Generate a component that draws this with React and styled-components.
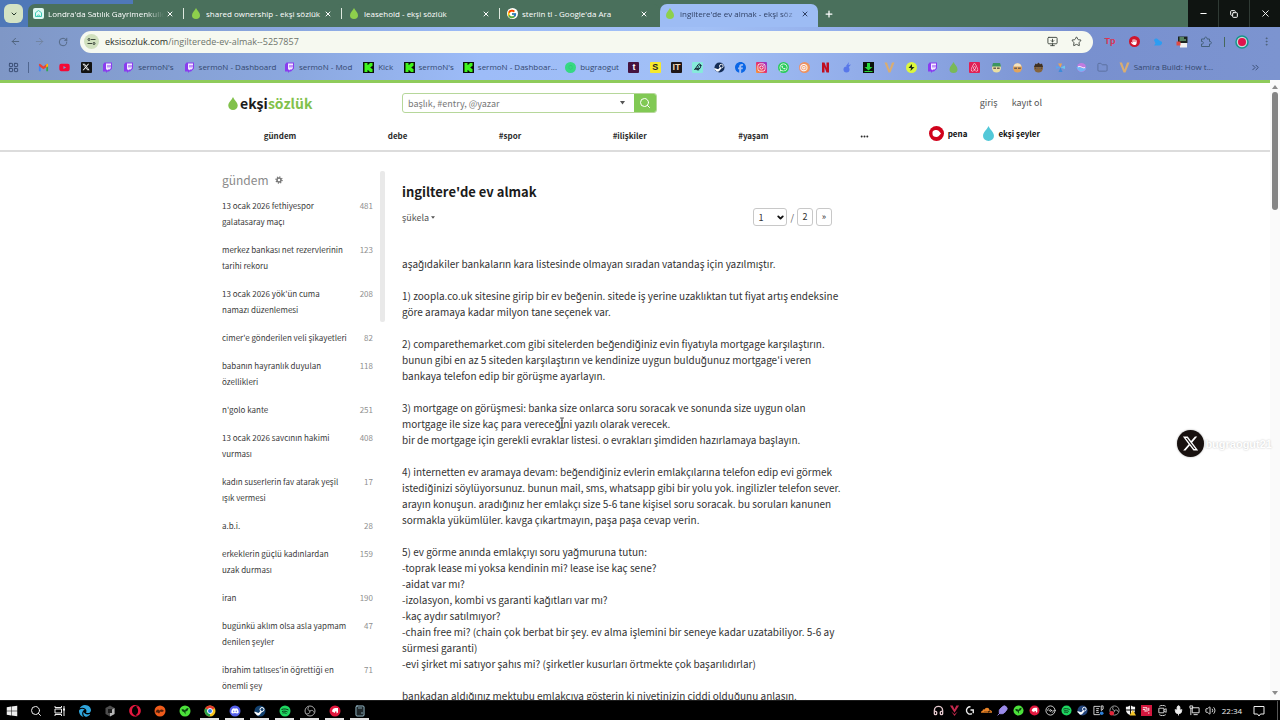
import React from "react";
import styled, { createGlobalStyle, css } from "styled-components";
import {
  FaYoutube, FaXTwitter, FaFacebook, FaInstagram, FaWhatsapp, FaEllipsis,
  FaDiscord, FaAirbnb, FaEdge, FaWindows, FaOpera, FaCloudflare, FaHand,
} from "react-icons/fa6";
import { FcGoogle } from "react-icons/fc";
import {
  ArrowLeft, ArrowRight, RotateCw, Search, Star, Puzzle, Plus, X, Minus, Copy, ChevronDown, ChevronsRight,
  Folder, LayoutGrid, MonitorDown, EllipsisVertical, Mic, Volume2, Feather, Headphones,
  Calculator, Disc3, Bird,
} from "lucide-react";

const siteFont = `"Noto Sans CJK JP", "Noto Sans", sans-serif`;
const uiFont = `"Open Sans", "Noto Sans", sans-serif`;

const GlobalStyle = createGlobalStyle`
  *, *::before, *::after { box-sizing: border-box; }
  body { margin: 0; background: #fff; font-family: ${siteFont}; }
  button, input, select { font: inherit; color: inherit; border: 0; padding: 0; background: none; outline: 0; }
  a { color: inherit; text-decoration: none; }
  ul, h1, h2, p { margin: 0; padding: 0; list-style: none; font-weight: inherit; }
  svg { display: block; flex: none; }
`;

const Screen = styled.div`
  height: 100vh;
  display: flex;
  flex-direction: column;
  overflow: hidden;
`;

/* ---------- browser ---------- */
const TabStrip = styled.div`
  flex: none;
  display: flex;
  height: 27px;
  font: 8px/12px ${uiFont};
  color: #fff;
  background: linear-gradient(90deg, #4f78b8 0 133px, #4a705c 133px);
`;
const TabSearch = styled.button`
  flex: none;
  width: 19px;
  height: 19px;
  margin: 4px 5px 0 4px;
  border-radius: 6px;
  background: #d4e3c4;
  color: #26382c;
  display: grid;
  place-items: center;
`;
const Tab = styled.div`
  position: relative;
  flex: 0 1 158px;
  min-width: 0;
  display: flex;
  align-items: center;
  gap: 4px;
  margin-top: 4px;
  padding: 0 7px 4px 4px;
  border-radius: 7px 7px 0 0;
  background: ${(p) => (p.$active ? "#9dbcf4" : "#4a705c")};
  color: ${(p) => (p.$active ? "#304064" : "#fff")};
  ${(p) => p.$divider && css`
    &::after {
      content: "";
      position: absolute;
      right: 2px;
      top: 4px;
      width: 1px;
      height: 11px;
      background: #dfe9df;
    }
  `}
`;
const Favicon = styled.span`
  flex: none;
  width: 12px;
  display: grid;
  place-items: center;
`;
const TabTitle = styled.span`
  flex: 1;
  min-width: 0;
  margin-right: -4px;
  overflow: hidden;
  white-space: nowrap;
  ${(p) => p.$fade && css`mask-image: linear-gradient(90deg, #000 85%, transparent);`}
`;
const TabButton = styled.button`
  flex: none;
  display: grid;
  place-items: center;
  width: 12px;
  height: 12px;
  margin-right: ${(p) => (p.$wide ? "3px" : "0")};
`;
const NewTab = styled(TabButton)`
  margin: 8px 0 0 5px;
`;
const WindowButtons = styled.div`
  display: flex;
  gap: 1px;
  margin-left: auto;
  background: #2f3a34;
`;
const WindowButton = styled.button`
  width: 30px;
  background: #0f1411;
  display: grid;
  place-items: center;
`;
const chromeBlue = `linear-gradient(90deg, #7f97c6 0, #8ba8e0 300px, #9dbcf8 480px, #a2c0f6 700px, #93aeea 850px, #7890cf 1080px, #7c94d0 100%)`;
const Toolbar = styled.div`
  flex: none;
  display: flex;
  align-items: center;
  height: 29px;
  padding: 0 2px 0 3px;
  color: #4d6078;
  background: ${chromeBlue};
`;
const ToolButton = styled.button`
  display: grid;
  place-items: center;
  flex: none;
  width: 24px;
  height: 20px;
  color: ${(p) => p.$tone || "inherit"};
`;
const AddressBar = styled.div`
  flex: 1;
  display: flex;
  align-items: center;
  height: 22px;
  margin: 0 5px 0 5px;
  padding: 0 5px 0 4px;
  border-radius: 11px;
  background: #f6f9f0;
  color: #3c443c;
  font: 9px/14px ${uiFont};
`;
const SiteInfo = styled.button`
  width: 15px;
  height: 15px;
  border-radius: 50%;
  background: #d0e0be;
  display: grid;
  place-items: center;
  margin-right: 6px;
`;
const Address = styled.span`
  flex: 1;
  color: #6d746c;
  b { font-weight: 400; color: #262c26; }
`;
const ToolDivider = styled.span`
  width: 1px;
  height: 10px;
  margin: 0 5px 0 6px;
  background: #47685b;
`;
const Bookmarks = styled.nav`
  flex: none;
  display: flex;
  align-items: center;
  height: 24px;
  padding: 0 19px 2px 8px;
  color: #34486e;
  font: 8px/12px ${uiFont};
  background: ${chromeBlue};
`;
const BookmarkList = styled.div`
  flex: 1;
  display: flex;
  align-items: center;
  justify-content: space-between;
  margin: 0 40px 0 9px;
`;
const Bookmark = styled.a`
  display: flex;
  align-items: center;
  gap: 4px;
  flex: none;
  height: 12px;
  white-space: nowrap;
  > svg { width: 11px; height: 11px; }
`;
const BookmarkLabel = styled.span`
  width: ${(p) => p.$w}px;
`;
const Tile = styled.span`
  flex: none;
  display: grid;
  place-items: center;
  width: 11px;
  height: 11px;
  border-radius: ${(p) => (p.$round ? "50%" : "1px")};
  background: ${(p) => p.$bg};
  color: ${(p) => p.$fg || "#fff"};
  font: 700 9px/11px "Liberation Sans", sans-serif;
`;
const BookmarkDivider = styled.span`
  width: 1px;
  height: 11px;
  margin-left: 9px;
  background: #50668f;
`;

/* ---------- web page ---------- */
const Viewport = styled.div`
  position: relative;
  flex: 1;
  min-height: 0;
  display: flex;
  overflow: hidden;
`;
const Page = styled.div`
  flex: 1;
  min-width: 0;
  border-top: 3px solid #8fcb5b;
  background: #fff;
`;
const Scrollbar = styled.div`
  flex: none;
  display: flex;
  flex-direction: column;
  align-items: center;
  justify-content: space-between;
  width: 10px;
  padding: 5px 0;
  background: #fafafa;
  color: #8b8b8b;
`;
const Thumb = styled.div`
  flex: none;
  width: 6px;
  height: 118px;
  margin: 3px 0 auto;
  border-radius: 3px;
  background: #858585;
`;
const SiteHeader = styled.header`
  border-bottom: 2px solid #dcdcdc;
`;
const Container = styled.div`
  width: 100%;
  max-width: 826px;
  margin: 0 auto;
`;
const HeaderTop = styled(Container)`
  display: flex;
  align-items: center;
  height: 40px;
  padding: 0 6px;
`;
const Logo = styled.a`
  display: flex;
  align-items: center;
  gap: 2px;
  width: 174px;
  font-size: 14px;
  line-height: 20px;
  font-weight: 700;
  color: #1b1b1b;
  em { font-style: normal; color: #81c14b; }
`;
const SearchForm = styled.form`
  display: flex;
  width: 255px;
  height: 20px;
  border: 1px solid #b6d79a;
  border-radius: 3px;
  overflow: hidden;
  color: #555;
`;
const SearchInput = styled.input`
  flex: 1;
  min-width: 0;
  padding: 0 5px;
  font-size: 9px;
  &::placeholder { color: #777; opacity: 1; }
`;
const SearchMore = styled.button`
  width: 24px;
  display: grid;
  place-items: center;
`;
const SearchButton = styled.button`
  width: 22px;
  display: grid;
  place-items: center;
  color: #fff;
  background: #81c954;
`;
const Account = styled.nav`
  display: flex;
  gap: 14px;
  margin-left: auto;
  font-size: 9px;
  line-height: 16px;
  color: #555;
`;
const HeaderNav = styled(Container)`
  display: flex;
  height: 27px;
  padding-right: 8px;
  font-size: 8px;
  line-height: 16px;
  font-weight: 700;
  color: #2b2b2b;
`;
const Topics = styled.nav`
  flex: 1;
  display: flex;
  justify-content: space-around;
  margin-left: -4px;
  padding: 5px 14px 0 0;
`;
const TopicsMore = styled.button`
  height: 16px;
`;
const Sisters = styled.nav`
  display: flex;
  gap: 16px;
  color: #111;
`;
const Sister = styled.a`
  display: flex;
  align-items: center;
  gap: 4px;
  height: 21px;
`;
const Columns = styled(Container)`
  display: flex;
  align-items: flex-start;
  padding-top: 19px;
`;
const Sidebar = styled.aside`
  flex: none;
  width: 151px;
  font-size: 8px;
  line-height: 16px;
  color: #3a3a3a;
`;
const SidebarTitle = styled.h2`
  display: flex;
  align-items: center;
  gap: 6px;
  height: 17px;
  margin-bottom: 10px;
  font-size: 12px;
  color: #8a8a8a;
`;
const TopicLink = styled.a`
  display: flex;
  justify-content: space-between;
  margin-bottom: 12px;
  white-space: pre;
  small { font-size: 8px; color: #8f8f8f; }
`;
const SidebarTrack = styled.div`
  flex: none;
  width: 5px;
  height: 151px;
  margin: 0 17px 0 7px;
  border-radius: 2px;
  background: #e9e9e9;
`;
const Entry = styled.main`
  width: 430px;
  padding-top: 9px;
  color: #333;
`;
const Title = styled.h1`
  font-size: 13px;
  line-height: 24px;
  font-weight: 700;
  color: #1b1b1b;
`;
const EntryTools = styled.div`
  display: flex;
  justify-content: space-between;
  align-items: center;
  height: 26px;
  margin-bottom: 26px;
  font-size: 9px;
  color: #555;
`;
const SortButton = styled.button`
  display: flex;
  align-items: center;
  gap: 2px;
`;
const Pager = styled.div`
  display: flex;
  align-items: center;
  gap: 3px;
`;
const pagerBox = css`
  height: 18px;
  border: 1px solid #c8c8c8;
  border-radius: 3px;
  color: #333;
`;
const PageSelect = styled.label`
  display: grid;
  align-items: center;
  color: #111;
  > * { grid-area: 1 / 1; }
  svg { justify-self: end; margin-right: 2px; pointer-events: none; }
`;
const Select = styled.select`
  ${pagerBox}
  appearance: none;
  width: 34px;
  padding-left: 4px;
`;
const PageLink = styled.a`
  ${pagerBox}
  width: 16px;
  line-height: 16px;
  text-align: center;
`;
const EntryText = styled.p`
  font-size: 10px;
  line-height: 16px;
  white-space: pre;
`;
const Watermark = styled.div`
  position: absolute;
  right: 8px;
  top: 350px;
  display: flex;
  align-items: center;
  gap: 1px;
  color: #fff;
  font: 700 11px/26px "Liberation Sans", sans-serif;
  text-shadow: 0 0 2px #bbb;
`;
const WatermarkBadge = styled.span`
  width: 27px;
  height: 27px;
  border-radius: 50%;
  background: #18110f;
  box-shadow: 0 0 2px #999;
  display: grid;
  place-items: center;
`;
const Caret = styled.svg`
  position: absolute;
  left: 558px;
  top: 337px;
`;

/* ---------- taskbar ---------- */
const Taskbar = styled.footer`
  flex: none;
  display: flex;
  height: 20px;
  border-top: 1px solid #1c1c1c;
  background: #000;
  color: #eee;
  font: 8px/19px ${uiFont};
`;
const TaskButton = styled.button`
  flex: none;
  display: grid;
  place-items: center;
  width: ${(p) => (p.$first ? "24px" : "25px")};
  ${(p) => p.$open && css`
    background: linear-gradient(#e4e4e4, #e4e4e4) center bottom / 19px 2px no-repeat;
  `}
  > svg { width: 12px; height: 12px; }
`;
const Tray = styled.div`
  display: flex;
  margin-left: auto;
  padding-right: 2px;
`;
const TrayButton = styled.button`
  display: grid;
  place-items: center;
  width: 16px;
  svg { width: 11px; height: 11px; }
`;
const Clock = styled.time`
  width: 28px;
  text-align: center;
`;
const Notifications = styled.button`
  width: 25px;
  display: grid;
  place-items: center;
  margin-right: 6px;
`;
const ShowDesktop = styled.span`
  width: 1px;
  background: #555;
`;

/* ---------- drawings ---------- */
const Drop = ({ fill, w = 8, h = 11 }) => (
  <svg width={w} height={h} viewBox="0 0 16 22" fill={fill}>
    <path d="M8 0C10 5 16 9 16 14.5A8 7.5 0 0 1 0 14.5C0 9 6 5 8 0Z" />
  </svg>
);
const HouseFavicon = () => (
  <svg width="11" height="11" viewBox="0 0 22 22">
    <rect width="22" height="22" rx="4" fill="#dff8f2" />
    <path d="M5 17V9.500L11 5l6 4.500V17z M8 17c0-4 6-4 6 0" fill="none" stroke="#3cc8b4" strokeWidth="2" />
  </svg>
);
const KickIcon = () => (
  <svg viewBox="0 0 22 22">
    <rect width="22" height="22" fill="#0a120a" />
    <path d="M3 2h6v4h2V4h2V2h6v6h-2v2h-2v2h2v2h2v6h-6v-2h-2v-2H9v4H3z" fill="#3ff51c" />
  </svg>
);
const GmailIcon = () => (
  <svg viewBox="0 0 24 24">
    <path d="M2 20V6l4 3v11z" fill="#4285f4" /><path d="M22 20V6l-4 3v11z" fill="#34a853" />
    <path d="M2 6c0-3 2-3 4-1l6 5 6-5c2-2 4-2 4 1l-1 3-9 7-9-7z" fill="#ea4335" />
    <path d="M18 5c2-2 4-2 4 1v3l-4 3z" fill="#fbbc04" />
  </svg>
);
const TwitchIcon = () => (
  <svg viewBox="0 0 22 22">
    <path d="M5 1h15v12l-6 6h-3l-3 3v-3H2V5z" fill="#8a3cf0" />
    <path d="M8 3h10v9l-3 3h-3l-2 2v-2H8z" fill="#f3ecff" />
    <path d="M11 6h2v5h-2zM15 6h2v5h-2z" fill="#8a3cf0" />
  </svg>
);
const SteamIcon = ({ dark = "#132c55" }) => (
  <svg viewBox="0 0 24 24">
    <circle cx="12" cy="12" r="11" fill={dark} />
    <circle cx="16" cy="9" r="4" fill="none" stroke="#fff" strokeWidth="2" />
    <path d="M1 13l8 3 4-4 3 2-5 6c-3 2-6 1-7-2l-3-2z" fill="#fff" />
  </svg>
);
const VIcon = () => (
  <svg viewBox="0 0 22 22"><path d="M1 1h5l5 14 5-14h5l-8 20H9z" fill="#d9ad72" /></svg>
);
const Tune = () => (
  <svg width="9" height="9" viewBox="0 0 18 18" fill="none" stroke="#39443a" strokeWidth="2">
    <circle cx="4" cy="5" r="2" /><path d="M8 5h9M1 13h9" /><circle cx="14" cy="13" r="2" />
  </svg>
);
const Triangle = ({ up, w = 6 }) => (
  <svg width={w} height={w / 2 + 1} viewBox="0 0 12 8" fill="currentColor">
    <path d={up ? "M0 8 6 0l6 8z" : "M0 0h12L6 8z"} />
  </svg>
);
const Gear = () => (
  <svg width="8" height="8" viewBox="0 0 16 16" fill="none" stroke="#777">
    <circle cx="8" cy="8" r="4" strokeWidth="3" />
    <circle cx="8" cy="8" r="6" strokeWidth="3" strokeDasharray="2 2.700" />
  </svg>
);
const SpikyFace = ({ a, b, shape }) => (
  <svg viewBox="0 0 22 22">
    <circle cx="11" cy="12" r="9" fill={a} />
    <path d={shape} fill={b} />
    <path d="M5 11h5v3H5zM12 11h5v3h-5z" fill="#473321" />
    <circle cx="8" cy="12" r="1" fill="#fff" /><circle cx="14" cy="12" r="1" fill="#fff" />
  </svg>
);
const Pinwheel = () => (
  <svg viewBox="0 0 22 22">
    <path d="M11 11 6 3h8z" fill="#eba354" /><path d="m11 11 9-4v7z" fill="#6cc6ee" />
    <path d="m11 11 4 9H7z" fill="#3e8bd8" /><path d="m11 11-9 3V8z" fill="#5aa3ee" />
  </svg>
);
const TaskView = () => (
  <svg viewBox="0 0 24 24" fill="none" stroke="#eee" strokeWidth="2">
    <path d="M2 2v3h13V2M2 22v-3h13v3M2 8h13v8H2zM20 2v20" /><path d="M18 7h4v4h-4z" fill="#eee" stroke="none" />
  </svg>
);
const Obs = ({ red }) => (
  <svg viewBox="0 0 24 24" fill="none" stroke="#a9a9a9" strokeWidth="2">
    <circle cx="12" cy="12" r="10" /><path d="M12 12c-5-1-5-6-2-8M12 12c4-3 8 0 8 3M12 12c0 5-4 7-7 5" />
    {red && <circle cx="6" cy="18" r="5" fill="#e2263a" stroke="none" />}
  </svg>
);
const RedSwirl = () => (
  <svg viewBox="0 0 24 24">
    <circle cx="12" cy="12" r="11" fill="#e3173e" />
    <path d="M6 13c0-5 4-7 7-7h5v9l-3 2v-4h-3v3z" fill="#fff" />
  </svg>
);
const GreenLeaf = () => (
  <svg viewBox="0 0 24 24">
    <circle cx="12" cy="12" r="11" fill="#4ce23a" />
    <path d="M5 9c3-1 5 0 7 2 1-3 3-5 7-5-1 5-3 7-6 7v6l-3-5c-3 0-4-2-5-5z" fill="#0c4412" />
  </svg>
);
const SpotifyDisc = () => (
  <svg viewBox="0 0 24 24">
    <circle cx="12" cy="12" r="11" fill="#1ed760" />
    <path d="M5 9c5-2 10-1 14 1M6 13c4-1 8-1 11 1M7 16c3-1 6 0 8 1" fill="none" stroke="#0b3a1b" strokeWidth="2" />
  </svg>
);
const Valorant = () => (
  <svg viewBox="0 0 24 24" fill="#c4284c">
    <path d="M2 1h6l4 8 4-8h6L12 17zM5 14l7 10 7-10-7 6z" />
  </svg>
);
const NetworkIcon = () => (
  <svg viewBox="0 0 24 24" fill="none" stroke="#eee" strokeWidth="2">
    <path d="M7 6h15v11H7zM10 21h9M2 2h6v5H2zM4 7v15" />
  </svg>
);
const Cube = () => (
  <svg viewBox="0 0 24 24">
    <path d="M12 1l9 5v12l-9 5-9-5V6z" fill="#4d4d4d" /><path d="M12 12l9-6v12l-9 5z" fill="#b5b5b5" /><path d="M8 8h8v8H8z" fill="#1b1b1b" />
  </svg>
);
const WindowFrame = () => (
  <svg viewBox="0 0 24 24" fill="none" stroke="#ddd" strokeWidth="2">
    <path d="M16 3H2v18h13M7 8h6M7 12h5M7 16h6M18 2v10l4-3V2z" /><circle cx="19" cy="18" r="4" fill="#2d7fd8" stroke="none" />
  </svg>
);
const Shield = () => (
  <svg viewBox="0 0 24 24">
    <path d="M11 1v9H2V4c4 0 6-1 9-3zM13 1v9h9V4c-4 0-6-1-9-3zM2 12h9v10c-5-2-8-5-9-10zM13 12h9c-1 5-4 8-9 10z" fill="#f4f4f4" />
    <path d="M17 11l7 12H10z" fill="#f3c52b" />
  </svg>
);
const WebcamIcon = () => (
  <svg viewBox="0 0 24 24" fill="none" stroke="#ddd" strokeWidth="2">
    <path d="M4 7h11v10H4zM15 11l5-3v8l-5-3M5 3c4-3 10-3 14 0M5 21c4 3 10 3 14 0" />
  </svg>
);
const PuzzleOutline = () => (
  <svg width="12" height="12" viewBox="0 0 24 24" fill="none" stroke="currentColor" strokeWidth="2">
    <path d="M3 6h6c-1-5 6-5 5 0h5v5c5-1 5 6 0 5v5H3v-5c5 1 5-6 0-5z" />
  </svg>
);
const NoteIcon = () => (
  <svg width="12" height="12" viewBox="0 0 24 24" fill="none" stroke="#eee" strokeWidth="2">
    <path d="M2 3h20v15h-7l-3 4-3-4H2z" />
  </svg>
);

const tabs = [
  { title: "Londra'da Satılık Gayrimenkulle", icon: <HouseFavicon />, fade: true, divider: true },
  { title: "shared ownership - ekşi sözlük", icon: <Drop fill="#8ed04c" />, divider: true },
  { title: "leasehold - ekşi sözlük", icon: <Drop fill="#8ed04c" />, divider: true },
  { title: "sterlin tl - Google'da Ara", icon: <Tile $round $bg="#fff"><FcGoogle size={10} /></Tile> },
  { title: "ingiltere'de ev almak - ekşi söz", icon: <Drop fill="#8ed04c" />, fade: true, active: true },
];

const bookmarks = [
  [<GmailIcon />], [<FaYoutube color="#f50a36" />], [<Tile $bg="#121212"><FaXTwitter size={8} /></Tile>], [<TwitchIcon />],
  [<TwitchIcon />, "sermoN's", 35],
  [<TwitchIcon />, "sermoN - Dashboard", 75],
  [<TwitchIcon />, "sermoN - Mod", 54],
  [<KickIcon />, "Kick", 15], [<KickIcon />, "sermoN's", 34],
  [<KickIcon />, "sermoN - Dashboar...", 77],
  [<Tile $round $bg="#36d982" $fg="#2bc072">○</Tile>, "bugraogut", 38],
  [<Tile $bg="#45133f">t</Tile>], [<Tile $bg="#f6e92d" $fg="#222">S</Tile>],
  [<Tile $bg="#1e1718" $fg="#f5d9b8">IT</Tile>],
  [<Tile $bg="#86eadb" $fg="#123"><Bird size={8} strokeWidth={3} /></Tile>],
  [<SteamIcon />], [<FaFacebook color="#0a66e6" />],
  [<Tile $bg="linear-gradient(45deg,#f7a334,#e5306f 50%,#8b36d6)"><FaInstagram size={9} /></Tile>],
  [<Tile $round $bg="#2ccb5c"><FaWhatsapp size={9} /></Tile>],
  [<Tile $round $bg="#ee9160">◎</Tile>],
  [<svg viewBox="0 0 22 22"><path d="M4 1h5l4 11V1h5v20h-5L9 10v11H4z" fill="#c00d20" /></svg>],
  [<svg viewBox="0 0 22 22" fill="#5877ea"><circle cx="9" cy="15" r="6" /><path d="M8 8 14 0l-1 6 5-1-6 7z" /></svg>],
  [<svg viewBox="0 0 22 22"><path d="M0 0h22v22H0z" fill="#0b120b" /><path d="M8 2h6v8h5l-8 7-8-7h5zM3 18h16v2H3z" fill="#29d83b" /></svg>],
  [<VIcon />],
  [<svg viewBox="0 0 22 22"><circle cx="11" cy="11" r="11" fill="#dcf73e" /><path d="m12 4-7 8h5l-1 6 8-8h-5z" fill="#1d2c12" /></svg>],
  [<TwitchIcon />], [<Drop fill="#79b957" />],
  [<Tile $bg="#e01f55"><FaAirbnb size={9} /></Tile>],
  [<SpikyFace a="#eadfa2" b="#3c9560" shape="M2 9 4 2h14l2 7z" />],
  [<SpikyFace a="#e2a45c" b="#f3e3c0" shape="M3 9C4 0 18 0 19 9z" />],
  [<SpikyFace a="#86643b" b="#3f3022" shape="M2 10 5 3l3 2 3-4 3 4 4-2 2 7z" />],
  [<Pinwheel />],
  [<svg viewBox="0 0 22 22"><circle cx="11" cy="11" r="9" fill="#c17be0" /><path d="M1 11c5-7 9 6 20 0-3 10-15 12-20 0z" fill="#6fb6f5" /><path d="M4 10c5-4 9 4 14 1" fill="none" stroke="#fff" strokeWidth="2" /></svg>],
  [<Folder color="#5a6f9d" />],
  [<VIcon />, "Samira Build: How t...", 76],
];

const topics = ["gündem", "debe", "#spor", "#ilişkiler", "#yaşam"];

const sidebar = [
  ["13 ocak 2026 fethiyespor\ngalatasaray maçı", 481],
  ["merkez bankası net rezervlerinin\ntarihi rekoru", 123],
  ["13 ocak 2026 yök'ün cuma\nnamazı düzenlemesi", 208],
  ["cimer'e gönderilen veli şikayetleri", 82],
  ["babanın hayranlık duyulan\nözellikleri", 118],
  ["n'golo kante", 251],
  ["13 ocak 2026 savcının hakimi\nvurması", 408],
  ["kadın suserlerin fav atarak yeşil\nışık vermesi", 17],
  ["a.b.i.", 28],
  ["erkeklerin güçlü kadınlardan\nuzak durması", 159],
  ["iran", 190],
  ["bugünkü aklım olsa asla yapmam\ndenilen şeyler", 47],
  ["ibrahim tatlıses'in öğrettiği en\nönemli şey", 71],
];

const entry = `aşağıdakiler bankaların kara listesinde olmayan sıradan vatandaş için yazılmıştır.

1) zoopla.co.uk sitesine girip bir ev beğenin. sitede iş yerine uzaklıktan tut fiyat artış endeksine
göre aramaya kadar milyon tane seçenek var.

2) comparethemarket.com gibi sitelerden beğendiğiniz evin fiyatıyla mortgage karşılaştırın.
bunun gibi en az 5 siteden karşılaştırın ve kendinize uygun bulduğunuz mortgage'i veren
bankaya telefon edip bir görüşme ayarlayın.

3) mortgage on görüşmesi: banka size onlarca soru soracak ve sonunda size uygun olan
mortgage ile size kaç para vereceğini yazılı olarak verecek.
bir de mortgage için gerekli evraklar listesi. o evrakları şimdiden hazırlamaya başlayın.

4) internetten ev aramaya devam: beğendiğiniz evlerin emlakçılarına telefon edip evi görmek
istediğinizi söylüyorsunuz. bunun mail, sms, whatsapp gibi bir yolu yok. ingilizler telefon sever.
arayın konuşun. aradığınız her emlakçı size 5-6 tane kişisel soru soracak. bu soruları kanunen
sormakla yükümlüler. kavga çıkartmayın, paşa paşa cevap verin.

5) ev görme anında emlakçıyı soru yağmuruna tutun:
-toprak lease mi yoksa kendinin mi? lease ise kaç sene?
-aidat var mı?
-izolasyon, kombi vs garanti kağıtları var mı?
-kaç aydır satılmıyor?
-chain free mi? (chain çok berbat bir şey. ev alma işlemini bir seneye kadar uzatabiliyor. 5-6 ay
sürmesi garanti)
-evi şirket mi satıyor şahıs mi? (şirketler kusurları örtmekte çok başarılıdırlar)

bankadan aldığınız mektubu emlakçıya gösterin ki niyetinizin ciddi olduğunu anlasın.`;

const tasks = [
  ["Başlat", <FaWindows />], ["Ara", <Search />], ["Görev görünümü", <TaskView />],
  ["Edge", <FaEdge color="#2fa5dc" />], ["Unity", <Cube />], ["Opera GX", <FaOpera color="#e3173e" />],
  ["Oyun", <svg viewBox="0 0 24 24"><circle cx="12" cy="12" r="11" fill="#ef5b1b" /><path d="M3 15c3-8 6-6 8-4 3-3 6-3 9 1l-4 2-3-1-3 4-3-2z" fill="#51200c" /></svg>],
  ["Razer", <GreenLeaf />],
  ["Chrome", <svg viewBox="0 0 24 24"><circle cx="12" cy="12" r="11" fill="#f8c41d" /><path d="M12 12 2.500 6.500A11 11 0 0 1 21.500 6.500z" fill="#e33b2e" /><path d="M12 12 2.500 6.500A11 11 0 0 0 12 23z" fill="#2ca34c" /><circle cx="12" cy="12" r="5" fill="#2b7bea" stroke="#fff" strokeWidth="2" /></svg>, true],
  ["Discord", <svg viewBox="0 0 24 24"><circle cx="12" cy="12" r="11" fill="#5560ea" /><FaDiscord x="4" y="4" size={16} color="#fff" /></svg>, true],
  ["Steam", <SteamIcon dark="#12406e" />, true], ["Spotify", <SpotifyDisc />, true],
  ["OBS", <Obs />, true], ["Riot", <RedSwirl />, true], ["Hesap makinesi", <Calculator color="#9cc3d2" />, true],
];

const tray = [
  ["Kulaklık", <Headphones color="#e3c7cc" strokeWidth={3} />], ["Valorant", <Valorant />],
  ["Logitech", <svg viewBox="0 0 24 24" fill="none" stroke="#eee" strokeWidth="3"><path d="M12 4a8 8 0 1 0 3 15M12 11h6v7" /></svg>],
  ["Cloudflare", <FaCloudflare color="#e98326" />], ["Tüy", <Feather color="#9b8bea" fill="#9b8bea" />],
  ["Razer", <GreenLeaf />], ["Riot", <RedSwirl />], ["Disk", <Disc3 color="#ddd" />],
  ["Spotify", <SpotifyDisc />], ["Steam", <SteamIcon dark="#24457c" />],
  ["Ekran", <WindowFrame />], ["OBS", <Obs red />],
  ["Güvenlik", <Shield />],
  ["AMD", <svg viewBox="0 0 24 24"><path d="M0 0h24v24H0z" fill="#d3173e" /><path d="M4 6h9v9M4 10h5v5M17 6v7M17 16v3" fill="none" stroke="#fff" strokeWidth="2" /></svg>],
  ["Kamera", <WebcamIcon />], ["Mikrofon", <Mic fill="#eee" />], ["Ağ", <NetworkIcon />], ["Ses", <Volume2 />],
];

export default function App() {
  return (
    <Screen>
      <GlobalStyle />
      <TabStrip>
        <TabSearch aria-label="Sekmelerde ara"><ChevronDown size={8} strokeWidth={3} /></TabSearch>
        {tabs.map((t) => (
          <Tab key={t.title} $active={t.active} $divider={t.divider}>
            <Favicon>{t.icon}</Favicon>
            <TabTitle $fade={t.fade}>{t.title}</TabTitle>
            <TabButton $wide={!t.active} aria-label="Kapat"><X size={8} strokeWidth={3} /></TabButton>
          </Tab>
        ))}
        <NewTab aria-label="Yeni sekme"><Plus size={10} strokeWidth={3} /></NewTab>
        <WindowButtons>
          <WindowButton aria-label="Küçült"><Minus size={9} strokeWidth={3} /></WindowButton>
          <WindowButton aria-label="Geri yükle"><Copy size={8} strokeWidth={3} /></WindowButton>
          <WindowButton aria-label="Pencereyi kapat"><X size={11} /></WindowButton>
        </WindowButtons>
      </TabStrip>
      <Toolbar>
        <ToolButton aria-label="Geri"><ArrowLeft size={11} /></ToolButton>
        <ToolButton aria-label="İleri" $tone="#71839f"><ArrowRight size={11} /></ToolButton>
        <ToolButton aria-label="Yenile"><RotateCw size={10} /></ToolButton>
        <AddressBar>
          <SiteInfo aria-label="Site bilgisi"><Tune /></SiteInfo>
          <Address><b>eksisozluk.com</b>/ingilterede-ev-almak--5257857</Address>
          <ToolButton aria-label="Yükle"><MonitorDown size={11} /></ToolButton>
          <ToolButton aria-label="Yer işareti"><Star size={11} /></ToolButton>
        </AddressBar>
        <ToolButton aria-label="Uzantı"><Tile as="b" $bg="none" $fg="#d93352">Tp</Tile></ToolButton>
        <ToolButton aria-label="Engelleyici"><Tile $round $bg="#d0152c"><FaHand size={6} /></Tile></ToolButton>
        <ToolButton aria-label="Kuş">
          <svg width="10" height="10" viewBox="0 0 20 20"><path d="M2 6c2-4 7-4 9 0l7 4c1 4-2 7-6 7H2l3-4z" fill="#2c9df2" /></svg>
        </ToolButton>
        <ToolButton aria-label="Ekran">
          <svg width="12" height="12" viewBox="0 0 24 24"><path d="M4 1h19v13H4z" fill="#1c2420" /><path d="M7 4h9M7 8h13" stroke="#8fe0a0" strokeWidth="2" /><path d="M8 14h14v9H8z" fill="#f2f2f2" /><path d="M1 11h8v8H1z" fill="#e04a44" /></svg>
        </ToolButton>
        <ToolButton aria-label="Uzantılar" $tone="#45617c"><PuzzleOutline /></ToolButton>
        <ToolDivider />
        <ToolButton aria-label="Profil">
          <svg width="14" height="14" viewBox="0 0 28 28"><circle cx="14" cy="14" r="12" fill="#c9d9da" stroke="#17968a" strokeWidth="3" /><circle cx="14" cy="14" r="8" fill="#e0144c" /></svg>
        </ToolButton>
        <ToolButton aria-label="Menü"><EllipsisVertical size={11} /></ToolButton>
      </Toolbar>
      <Bookmarks>
        <Bookmark href="#" aria-label="Uygulamalar"><LayoutGrid /></Bookmark>
        <BookmarkDivider />
        <BookmarkList>
          {bookmarks.map(([icon, label, w], i) => (
            <Bookmark key={i} href="#">{icon}{label && <BookmarkLabel $w={w}>{label}</BookmarkLabel>}</Bookmark>
          ))}
        </BookmarkList>
        <Bookmark href="#" aria-label="Diğer"><ChevronsRight /></Bookmark>
      </Bookmarks>

      <Viewport>
        <Page>
          <SiteHeader>
            <HeaderTop>
              <Logo href="#"><Drop fill="#81c14b" w={10} h={13} /><span>ekşi<em>sözlük</em></span></Logo>
              <SearchForm>
                <SearchInput aria-label="Ara" placeholder="başlık, #entry, @yazar" />
                <SearchMore type="button" aria-label="Gelişmiş arama"><Triangle w={5} /></SearchMore>
                <SearchButton aria-label="Ara"><Search size={12} /></SearchButton>
              </SearchForm>
              <Account><a href="#">giriş</a><a href="#">kayıt ol</a></Account>
            </HeaderTop>
            <HeaderNav>
              <Topics>
                {topics.map((t) => <a key={t} href="#">{t}</a>)}
                <TopicsMore aria-label="Daha fazla"><FaEllipsis size={9} /></TopicsMore>
              </Topics>
              <Sisters>
                <Sister href="#">
                  <svg width="15" height="15" viewBox="0 0 30 30"><circle cx="15" cy="15" r="15" fill="#d0021b" /><path d="M7 12c1-3 4-4 8-4 3 0 5 2 9 7-4 5-6 7-9 7-5 0-8-2-8-6z" fill="#fff" /></svg>
                  pena
                </Sister>
                <Sister href="#"><Drop fill="#53c8d8" w={11} h={15} />ekşi şeyler</Sister>
              </Sisters>
            </HeaderNav>
          </SiteHeader>
          <Columns>
            <Sidebar>
              <SidebarTitle>gündem <Gear /></SidebarTitle>
              <ul>
                {sidebar.map(([text, n]) => (
                  <li key={text}><TopicLink href="#"><span>{text}</span><small>{n}</small></TopicLink></li>
                ))}
              </ul>
            </Sidebar>
            <SidebarTrack />
            <Entry>
              <Title>ingiltere'de ev almak</Title>
              <EntryTools>
                <SortButton>şükela <Triangle w={4} /></SortButton>
                <Pager>
                  <PageSelect>
                    <Select aria-label="Sayfa" defaultValue="1"><option>1</option><option>2</option></Select>
                    <ChevronDown size={9} strokeWidth={5} />
                  </PageSelect>
                  /
                  <PageLink href="#">2</PageLink>
                  <PageLink href="#">»</PageLink>
                </Pager>
              </EntryTools>
              <EntryText>{entry}</EntryText>
            </Entry>
          </Columns>
        </Page>
        <Scrollbar><Triangle up w={6} /><Thumb /><Triangle w={6} /></Scrollbar>
        <Caret width="8" height="12" viewBox="0 0 8 12" fill="none" stroke="#555"><path d="M2 1h4M2 11h4M4 1v10" /></Caret>
        <Watermark><WatermarkBadge><FaXTwitter size={17} /></WatermarkBadge>bugraogut21</Watermark>
      </Viewport>

      <Taskbar>
        {tasks.map(([name, icon, open], i) => (
          <TaskButton key={name} aria-label={name} $open={open} $first={i < 3}>{icon}</TaskButton>
        ))}
        <Tray>
          {tray.map(([name, icon]) => <TrayButton key={name} aria-label={name}>{icon}</TrayButton>)}
          <Clock>22:34</Clock>
          <Notifications aria-label="Bildirimler"><NoteIcon /></Notifications>
          <ShowDesktop />
        </Tray>
      </Taskbar>
    </Screen>
  );
}
